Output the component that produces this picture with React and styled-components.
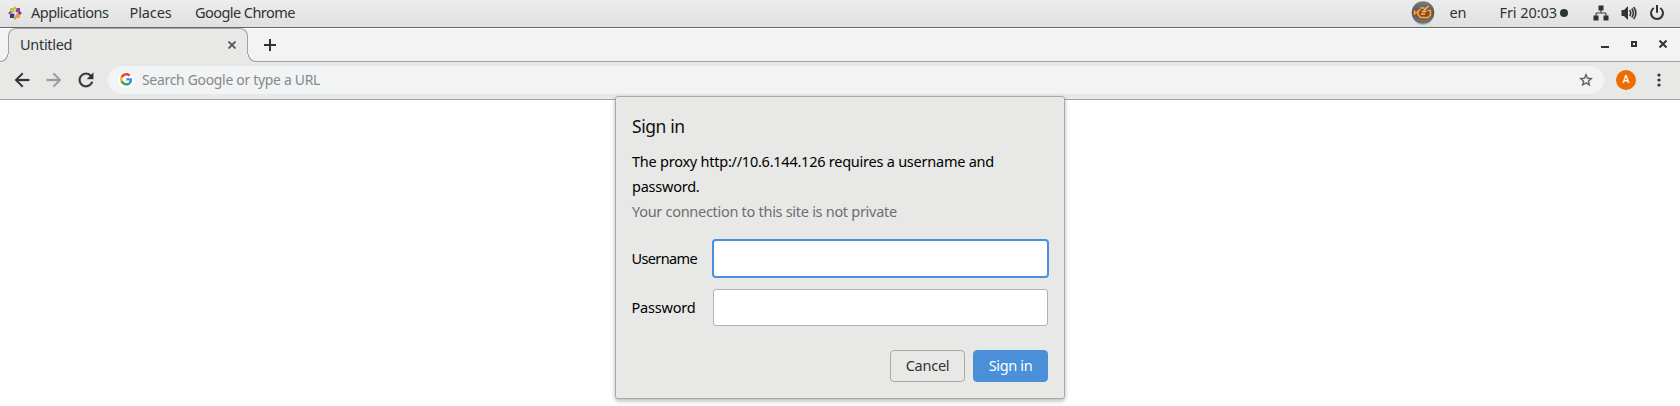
import React from 'react';
import styled, { createGlobalStyle } from 'styled-components';

const ink = '#2e3436';
const chrome = '#e8e8e6';
const strip = '#f3f3f3';
const line = '#a2a2a1';
const blue = '#4a90d9';

const GlobalStyle = createGlobalStyle`
  *, *::before, *::after { box-sizing: border-box; }
  body { margin: 0; background: #fff; overflow: hidden; }
  body, input, button { font-family: 'Noto Sans', 'Open Sans', sans-serif; font-size: 14.5px; }
  svg { display: block; flex: none; }
`;

const Desktop = styled.div`
  position: relative;
  display: flex;
  flex-direction: column;
  width: 1680px;
  height: 406px;
  color: ${ink};
  white-space: nowrap;
`;

/* Desktop panel */
const Panel = styled.header`
  display: flex;
  align-items: center;
  height: 28px;
  padding: 0 15px 3px 8px;
  background: linear-gradient(#ededed, #e0e0e0);
  border-bottom: 1px solid #666;
`;
const PanelMenu = styled.span`
  width: ${p => p.$width}px;
  line-height: 25px;
  letter-spacing: ${p => p.$track}px;
`;
const Logo = styled.svg`
  margin: 2px 9px 0 0;
`;
const Tray = styled.div`
  display: flex;
  align-items: center;
  height: 25px;
  margin-left: auto;
`;
const TrayText = styled.span`
  width: ${p => p.$width}px;
  letter-spacing: -0.08px;
`;
const Dot = styled.i`
  width: 8px;
  height: 8px;
  margin: 1px 25px 0 0;
  border-radius: 50%;
  background: ${ink};
`;
const TrayIcons = styled.div`
  display: flex;
  align-items: center;
  gap: 12px;
  padding-top: 2px;
`;
const Applet = styled.svg`
  margin: 1px 15px 0 0;
`;

/* Browser tab strip */
const TabStrip = styled.div`
  display: flex;
  height: 34px;
  padding-left: 8px;
  background: ${strip};
  border-bottom: 1px solid ${line};
  box-shadow: inset 0 1px #fff;
`;
const Tab = styled.div`
  position: relative;
  display: flex;
  align-items: center;
  justify-content: space-between;
  width: 240px;
  height: 34px;
  padding: 0 11px 2px 11px;
  letter-spacing: -0.3px;
  background: ${chrome};
  border: 1px solid ${line};
  border-bottom: 0;
  border-radius: 8px 8px 0 0;
  &::before, &::after {
    content: '';
    position: absolute;
    bottom: 0;
    width: 9px;
    height: 8px;
  }
  &::before {
    left: -9px;
    background: radial-gradient(circle at 0 0, ${strip} 6.7px, ${line} 7.2px 7.8px, ${chrome} 8.3px);
  }
  &::after {
    right: -9px;
    background: radial-gradient(circle at 100% 0, ${strip} 6.7px, ${line} 7.2px 7.8px, ${chrome} 8.3px);
  }
`;
const TabTitle = styled.span`
  line-height: 20px;
  padding-bottom: 1px;
`;
const NewTab = styled.svg`
  margin: 11px 0 0 16px;
`;
const WindowButtons = styled.div`
  display: flex;
  gap: 22px;
  margin: 12px 13px 0 auto;
`;

/* Browser toolbar */
const Toolbar = styled.div`
  display: flex;
  align-items: center;
  height: 38px;
  padding: 0 11.5px 2px 12px;
  background: ${chrome};
  border-bottom: 1px solid ${line};
`;
const NavButtons = styled.div`
  display: flex;
  gap: 12px;
  width: 96px;
`;
const Omnibox = styled.div`
  display: flex;
  flex: 1;
  align-items: center;
  height: 28px;
  padding: 0 10px;
  border-radius: 14px;
  background: #f1f3f4;
`;
const SearchBadge = styled.span`
  display: grid;
  place-items: center;
  width: 16px;
  height: 16px;
  border-radius: 50%;
  background: #fff;
`;
const Placeholder = styled.span`
  flex: 1;
  margin-left: 8px;
  font-size: 13.9px;
  letter-spacing: -0.27px;
  color: #85898c;
`;
const Avatar = styled.span`
  width: 20px;
  height: 20px;
  margin: 0 12.5px 0 12px;
  border-radius: 50%;
  background: #ef6c00;
  color: #fff;
  font: 500 10.5px/20px Roboto, sans-serif;
  text-align: center;
`;

/* Sign-in dialog */
const Dialog = styled.form`
  position: absolute;
  left: 615px;
  top: 96px;
  width: 450px;
  height: 303px;
  padding: 16px;
  background: ${chrome};
  border: 1px solid #a9a9a8;
  border-radius: 3px;
  box-shadow: 0 2px 4px rgba(0, 0, 0, 0.28);
  color: #000;
`;
const Title = styled.h1`
  margin: 0 0 10px;
  font-size: 17.5px;
  font-weight: 400;
  line-height: 26px;
  letter-spacing: -0.42px;
  color: #111;
`;
const Message = styled.p`
  margin: 0;
  line-height: 25px;
  letter-spacing: -0.24px;
  white-space: normal;
`;
const Warning = styled(Message)`
  color: #6b6f73;
  letter-spacing: -0.29px;
`;
const Fields = styled.div`
  display: grid;
  grid-template-columns: 81px 335px;
  row-gap: 12px;
  align-items: center;
  margin-top: 16px;
`;
const Label = styled.label`
  margin-left: -0.5px;
  letter-spacing: ${p => p.$track}px;
  line-height: 25px;
`;
const Input = styled.input`
  width: 335px;
  height: 37px;
  padding: 0 8px;
  outline: 0;
  background: #fff;
  border: 1px solid ${p => (p.$active ? blue : '#b2b2b1')};
  border-radius: 3px;
  box-shadow: ${p => (p.$active ? `0 0 0 1px ${blue}` : 'none')};
`;
const Actions = styled.div`
  display: flex;
  justify-content: flex-end;
  gap: 8px;
  margin-top: 24px;
`;
const Button = styled.button`
  width: 75px;
  height: 32px;
  padding: 0 0 2px;
  border: 1px solid ${p => (p.$primary ? blue : '#a9a9a8')};
  border-radius: 4px;
  background: ${p => (p.$primary ? blue : 'transparent')};
  color: ${p => (p.$primary ? '#fff' : ink)};
  letter-spacing: ${p => (p.$primary ? -0.35 : -0.25)}px;
`;

const CentosLogo = () => (
  <Logo width="14" height="14" viewBox="0 0 14 14">
    <path d="M2 2h4.400v4.400H2z" fill="#a6ce56" />
    <path d="M7.600 2H12v4.400H7.600z" fill="#a0408c" />
    <path d="M2 7.600h4.400V12H2z" fill="#38357e" />
    <path d="M7.600 7.600H12V12H7.600z" fill="#efa22f" />
    <path d="M7 0l2 2.200L7 5 5 2.200z" fill="#e5b53a" />
    <path d="M14 7l-2.200 2L9 7l2.800-2z" fill="#6a4397" />
    <path d="M7 14l-2-2.200L7 9l2 2.800z" fill="#94bd4a" />
    <path d="M0 7l2.200-2L5 7 2.200 9z" fill="#b64aa2" />
    <path d="M7 3v8M3 7h8" stroke="#f0e8f0" strokeWidth=".6" />
  </Logo>
);

const EngineApplet = () => (
  <Applet width="24" height="25" viewBox="0 0 24 25">
    <defs>
      <linearGradient id="engineBg" x2="0" y2="1">
        <stop stopColor="#7c7c7c" />
        <stop offset=".5" stopColor="#565656" />
        <stop offset="1" stopColor="#777" />
      </linearGradient>
    </defs>
    <ellipse cx="12" cy="14" rx="11" ry="11" fill="#bdbdbd" />
    <circle cx="12" cy="12.500" r="11.3" fill="url(#engineBg)" />
    <path d="M4 11v4h2.500l3 2.500h7.500l3-3V10l-3 .5L15 9h-5L6.500 11z" fill="#8f4d1c" stroke="#93501f" strokeWidth="2.500" strokeOpacity=".4" strokeLinejoin="round" />
    <path d="M3.500 10.500v4.500M3.500 12.500h3M9.500 9.500L7 11v3.500l2.500 3h7.500l2.500-2.500v-4.500h-3" stroke="#ffa145" strokeWidth="1.600" fill="none" strokeLinejoin="round" />
    <path d="M17.500 6L12 11.500h3.500M9.500 8h4M10 14h4" stroke="#ffb25e" strokeWidth="1.500" fill="none" />
  </Applet>
);

const GoogleG = () => (
  <svg width="12.6" height="12.6" viewBox="0 0 48 48">
    <path fill="#EA4335" d="M24 9.5c3.54 0 6.71 1.22 9.21 3.6l6.85-6.85C35.9 2.38 30.47 0 24 0 14.62 0 6.51 5.38 2.56 13.22l7.98 6.19C12.43 13.72 17.74 9.5 24 9.5z" />
    <path fill="#4285F4" d="M46.98 24.55c0-1.57-.15-3.09-.38-4.55H24v9.02h12.94c-.58 2.96-2.26 5.48-4.78 7.18l7.73 6c4.51-4.18 7.09-10.36 7.09-17.65z" />
    <path fill="#FBBC05" d="M10.53 28.59c-.48-1.45-.76-2.99-.76-4.59s.27-3.14.76-4.59l-7.98-6.19C.92 16.46 0 20.12 0 24c0 3.88.92 7.54 2.56 10.78l7.97-6.19z" />
    <path fill="#34A853" d="M24 48c6.48 0 11.93-2.13 15.89-5.81l-7.73-6c-2.15 1.45-4.92 2.3-8.16 2.3-6.26 0-11.57-4.22-13.47-9.91l-7.98 6.19C6.51 42.62 14.62 48 24 48z" />
  </svg>
);

export default function App() {
  return (
    <Desktop>
      <GlobalStyle />
      <Panel>
        <CentosLogo />
        <PanelMenu $width={98.5} $track={-0.5}>Applications</PanelMenu>
        <PanelMenu $width={65.5} $track={-0.1}>Places</PanelMenu>
        <PanelMenu $width={110} $track={-0.56}>Google Chrome</PanelMenu>
        <Tray>
          <EngineApplet />
          <TrayText $width={50}>en</TrayText>
          <TrayText $width={60.5}>Fri 20:03</TrayText>
          <Dot />
          <TrayIcons>
            <svg width="16" height="16" viewBox="0 0 16 16" fill={ink}>
              <path d="M5.500 0.500h5v5h-5zM.5 10.500h5v5h-5zM10.500 10.500h5v5h-5z" />
              <path d="M8 5v3M3 11V8h10v3" fill="none" stroke={ink} />
            </svg>
            <svg width="16" height="16" viewBox="0 0 16 16" fill={ink}>
              <path d="M.5 5H3l3.500-3.500H7v13h-.5L3 11H.5z" />
              <path d="M8.700 5q2 3 0 6M10.800 3.500q3.200 4.500 0 9M12.700 2q4.300 6 0 12" fill="none" stroke={ink} strokeWidth="1.600" />
            </svg>
            <svg width="16" height="16" viewBox="0 0 16 16" fill="none" stroke={ink} strokeWidth="2">
              <path d="M4.800 3A6 6 0 1 0 11.200 3" />
              <path d="M8 .5V7" strokeLinecap="round" />
            </svg>
          </TrayIcons>
        </Tray>
      </Panel>

      <TabStrip>
        <Tab>
          <TabTitle>Untitled</TabTitle>
          <svg width="8" height="8" viewBox="0 0 8 8" stroke="#54585a" strokeWidth="1.800">
            <path d="M.5.5l7 7M7.500.5l-7 7" />
          </svg>
        </Tab>
        <NewTab width="12" height="12" viewBox="0 0 12 12" stroke={ink} strokeWidth="2">
          <path d="M6 0v12M0 6h12" />
        </NewTab>
        <WindowButtons>
          <svg width="8" height="8" viewBox="0 0 8 8" fill={ink}><path d="M0 6h8v2H0z" /></svg>
          <svg width="6" height="8" viewBox="0 0 6 8" fill="none" stroke={ink} strokeWidth="2"><path d="M1 2h4v4H1z" /></svg>
          <svg width="8" height="8" viewBox="0 0 8 8" stroke={ink} strokeWidth="2"><path d="M.5.5l7 7M7.500.5l-7 7" /></svg>
        </WindowButtons>
      </TabStrip>

      <Toolbar>
        <NavButtons>
          <svg width="20" height="20" viewBox="1 1 22 22" fill={ink} stroke={ink} strokeWidth=".3"><path d="M20 11H7.830l5.590-5.590L12 4l-8 8 8 8 1.410-1.410L7.830 13H20v-2z" /></svg>
          <svg width="20" height="20" viewBox="1 1 22 22" fill="#999b9b" stroke="#999b9b" strokeWidth=".3"><path d="M12 4l-1.410 1.410L16.170 11H4v2h12.170l-5.580 5.590L12 20l8-8z" /></svg>
          <svg width="20" height="20" viewBox="1 1 22 22" fill={ink} stroke={ink} strokeWidth=".3"><path d="M17.650 6.350C16.200 4.900 14.210 4 12 4c-4.420 0-7.990 3.580-7.990 8s3.570 8 7.990 8c3.730 0 6.840-2.550 7.730-6h-2.080c-.82 2.330-3.040 4-5.650 4-3.310 0-6-2.690-6-6s2.690-6 6-6c1.660 0 3.140.69 4.220 1.780L13 11h7V4l-2.350 2.350z" /></svg>
        </NavButtons>
        <Omnibox>
          <SearchBadge><GoogleG /></SearchBadge>
          <Placeholder>Search Google or type a URL</Placeholder>
          <svg width="16" height="16" viewBox="0 0 24 24" fill="#54585b" stroke="#54585b" strokeWidth=".4"><path d="M22 9.240l-7.190-.62L12 2 9.190 8.630 2 9.240l5.460 4.730L5.820 21 12 17.270 18.180 21l-1.630-7.030L22 9.240zM12 15.400l-3.760 2.270 1-4.280-3.320-2.880 4.380-.38L12 6.100l1.710 4.040 4.380.38-3.320 2.880 1 4.280L12 15.400z" /></svg>
        </Omnibox>
        <Avatar>A</Avatar>
        <svg width="20" height="14" viewBox="0 0 20 14" fill={ink}>
          <circle cx="10" cy="2" r="1.600" /><circle cx="10" cy="7" r="1.600" /><circle cx="10" cy="12" r="1.600" />
        </svg>
      </Toolbar>

      <Dialog>
        <Title>Sign in</Title>
        <Message>The proxy http://10.6.144.126 requires a username and password.</Message>
        <Warning>Your connection to this site is not private</Warning>
        <Fields>
          <Label htmlFor="username" $track={-0.62}>Username</Label>
          <Input id="username" $active />
          <Label htmlFor="password" $track={-0.2}>Password</Label>
          <Input id="password" type="password" />
        </Fields>
        <Actions>
          <Button type="button">Cancel</Button>
          <Button type="button" $primary>Sign in</Button>
        </Actions>
      </Dialog>
    </Desktop>
  );
}
